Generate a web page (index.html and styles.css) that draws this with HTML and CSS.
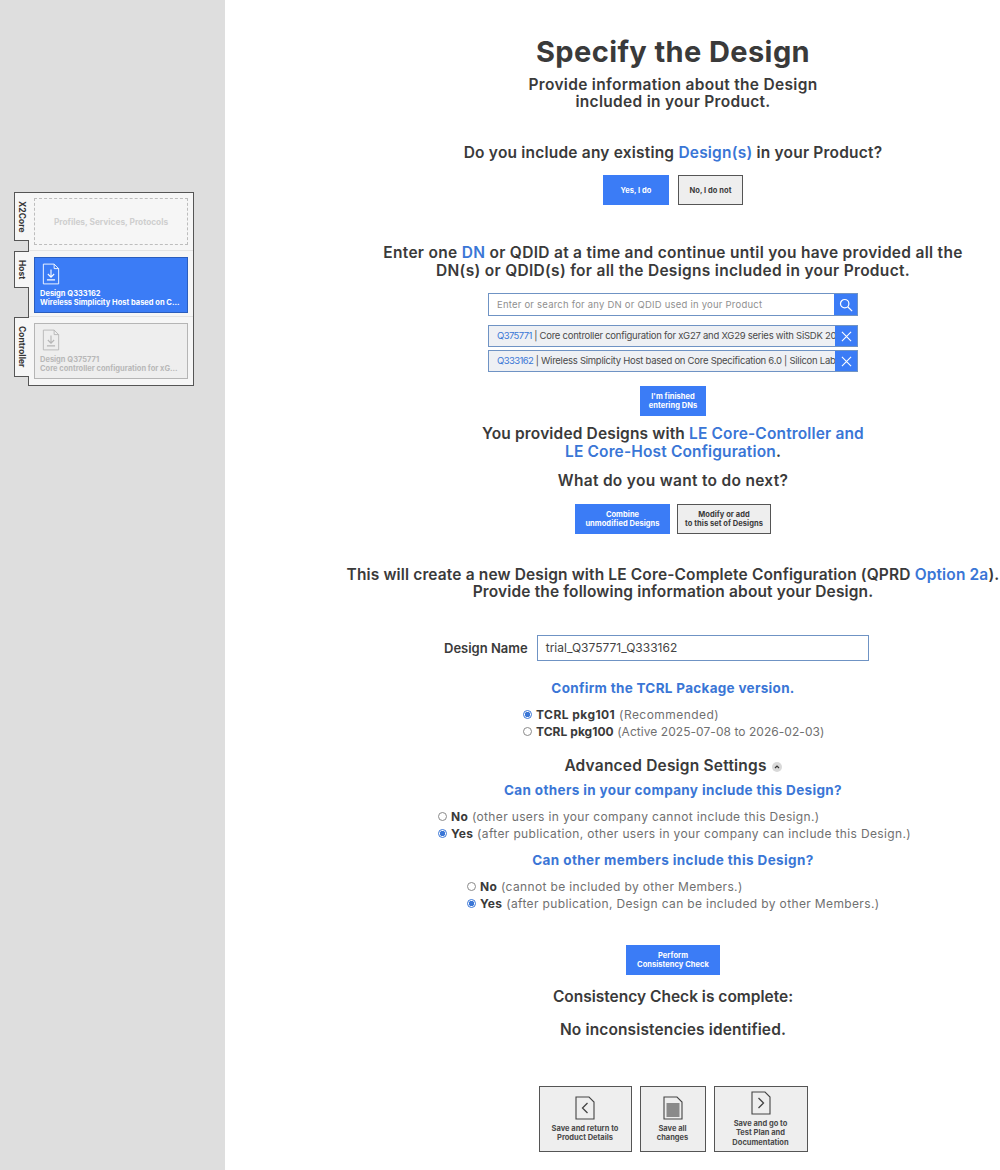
FILE: index.html
```html
<!DOCTYPE html>
<html lang="en">
<head>
<meta charset="utf-8">
<title>Specify the Design</title>
<link rel="stylesheet" href="styles.css">
</head>
<body>
<div class="page">
  <aside class="side">
    <div class="tree">
      <div class="tabs">
        <div class="tab tab-x2"><span>X2Core</span></div>
        <div class="tab tab-host"><span>Host</span></div>
        <div class="tab tab-ctrl"><span>Controller</span></div>
      </div>
      <div class="slots">
        <div class="slot slot-top"><div class="empty">Profiles, Services, Protocols</div></div>
        <div class="slot slot-mid">
          <div class="card card-on">
            <svg class="card-ico" viewBox="0 0 20 24"><path d="M1.5 1h12l5 5v17h-17z M13.500 1v5h5" fill="none" stroke="#fff" stroke-width="1"/><path d="M10 7v8M6.500 12l3.500 3.500 3.500-3.500M5.500 18.500h9" fill="none" stroke="#fff" stroke-width="1.200"/></svg>
            <div class="card-t">Design Q333162</div>
            <div class="card-t">Wireless Simplicity Host based on C...</div>
          </div>
        </div>
        <div class="slot slot-bot">
          <div class="card card-off">
            <svg class="card-ico" viewBox="0 0 20 24"><path d="M1.5 1h12l5 5v17h-17z M13.500 1v5h5" fill="none" stroke="#b5b5b5" stroke-width="1"/><path d="M10 7v8M6.500 12l3.500 3.500 3.500-3.500M5.500 18.500h9" fill="none" stroke="#b5b5b5" stroke-width="1.200"/></svg>
            <div class="card-t">Design Q375771</div>
            <div class="card-t">Core controller configuration for xG...</div>
          </div>
        </div>
      </div>
    </div>
  </aside>
  <main class="main">
    <h1 class="title">Specify the Design</h1>
    <p class="sub">Provide information about the Design<br>included in your Product.</p>
    <p class="q q1">Do you include any existing <a class="lnk">Design(s)</a> in your Product?</p>
    <div class="btns b1">
      <button class="btn on w66">Yes, I do</button>
      <button class="btn off w65">No, I do not</button>
    </div>
    <p class="q q2">Enter one <a class="lnk">DN</a> or QDID at a time and continue until you have provided all the<br>DN(s) or QDID(s) for all the Designs included in your Product.</p>
    <div class="search">
      <div class="search-in">Enter or search for any DN or QDID used in your Product</div>
      <div class="search-go"><svg viewBox="0 0 16 16" width="14" height="14"><circle cx="6.500" cy="6.500" r="4.800" fill="none" stroke="#fff" stroke-width="1.400"/><path d="M10 10l5 5" stroke="#fff" stroke-width="1.400"/></svg></div>
    </div>
    <div class="chip c1"><div class="chip-t"><a class="qid">Q375771</a> | Core controller configuration for xG27 and XG29 series with SiSDK 2024.12</div><div class="chip-x"><svg viewBox="0 0 12 12" width="11" height="11"><path d="M1 1l10 10M11 1L1 11" stroke="#fff" stroke-width="1.200"/></svg></div></div>
    <div class="chip c2"><div class="chip-t"><a class="qid">Q333162</a> | Wireless Simplicity Host based on Core Specification 6.0 | Silicon Labs</div><div class="chip-x"><svg viewBox="0 0 12 12" width="11" height="11"><path d="M1 1l10 10M11 1L1 11" stroke="#fff" stroke-width="1.200"/></svg></div></div>
    <div class="btns b2"><button class="btn on w66">I'm finished<br>entering DNs</button></div>
    <p class="q q3">You provided Designs with <a class="lnk">LE Core-Controller and<br>LE Core-Host Configuration</a>.</p>
    <p class="q q4">What do you want to do next?</p>
    <div class="btns b3">
      <button class="btn on w95">Combine<br>unmodified Designs</button>
      <button class="btn off w94">Modify or add<br>to this set of Designs</button>
    </div>
    <p class="q q5">This will create a new Design with LE Core-Complete Configuration (QPRD <a class="lnk">Option 2a</a>).<br>Provide the following information about your Design.</p>
    <div class="name">
      <label class="name-l">Design Name</label>
      <div class="name-in">trial_Q375771_Q333162</div>
    </div>
    <p class="h-blue h1b">Confirm the TCRL Package version.</p>
    <div class="radios r1">
      <div class="radio ls-a"><i class="dot sel"></i><span><b>TCRL pkg101</b> (Recommended)</span></div>
      <div class="radio ls-b"><i class="dot"></i><span><b>TCRL pkg100</b> (Active 2025-07-08 to 2026-02-03)</span></div>
    </div>
    <p class="adv">Advanced Design Settings <svg class="chev" viewBox="0 0 10 10" width="10" height="10"><circle cx="5" cy="5" r="5" fill="#d9d9d9"/><path d="M3 6l2-2 2 2" fill="none" stroke="#333" stroke-width="1.200"/></svg></p>
    <p class="h-blue h2b">Can others in your company include this Design?</p>
    <div class="radios r2">
      <div class="radio"><i class="dot"></i><span><b>No</b> (other users in your company cannot include this Design.)</span></div>
      <div class="radio"><i class="dot sel"></i><span><b>Yes</b> (after publication, other users in your company can include this Design.)</span></div>
    </div>
    <p class="h-blue h3b">Can other members include this Design?</p>
    <div class="radios r3">
      <div class="radio"><i class="dot"></i><span><b>No</b> (cannot be included by other Members.)</span></div>
      <div class="radio"><i class="dot sel"></i><span><b>Yes</b> (after publication, Design can be included by other Members.)</span></div>
    </div>
    <div class="btns b4"><button class="btn on w94">Perform<br>Consistency Check</button></div>
    <p class="q q6">Consistency Check is complete:</p>
    <p class="q q7">No inconsistencies identified.</p>
    <div class="btns b5">
      <button class="save s1"><svg class="save-ico" viewBox="0 0 20 24"><path d="M1 1h13l5 5v17H1z" fill="none" stroke="#444" stroke-width="1.100"/><path d="M12.500 7l-5 5 5 5" fill="none" stroke="#444" stroke-width="1.300"/></svg><span>Save and return to<br>Product Details</span></button>
      <button class="save s2"><svg class="save-ico" viewBox="0 0 20 24"><path d="M1 1h13l5 5v17H1z" fill="none" stroke="#444" stroke-width="1.100"/><rect x="3.500" y="7" width="13" height="14" fill="#8a8a8a"/></svg><span>Save all<br>changes</span></button>
      <button class="save s3"><svg class="save-ico" viewBox="0 0 20 24"><path d="M1 1h13l5 5v17H1z" fill="none" stroke="#444" stroke-width="1.100"/><path d="M7.500 7l5 5-5 5" fill="none" stroke="#444" stroke-width="1.300"/></svg><span>Save and go to<br>Test Plan and<br>Documentation</span></button>
    </div>
  </main>
</div>
</body>
</html>
```
FILE: styles.css
```css
* { box-sizing: border-box; }
html, body { margin: 0; padding: 0; background: #fff; }
body { font-family: Inter, "Liberation Sans", sans-serif; color: #3a3a3a; overflow: hidden; }
p { margin: 0; }
.page { display: flex; width: 1000px; height: 1170px; }
.side { width: 225px; flex: none; background: #dedede; padding: 192px 0 0 14px; }
.main { width: 775px; height: 1170px; padding-left: 121px; display: flex; flex-direction: column; align-items: center; text-align: center; white-space: nowrap; }
.main > * { flex: none; }

/* tree */
.tree { display: flex; width: 180px; height: 194px; }
.tabs { width: 14px; flex: none; display: flex; flex-direction: column; border-top: 1px solid #555; }
.tab { width: 15px; position: relative; z-index: 1; background: #f6f6f6; border-left: 1px solid #555; border-bottom: 1px solid #555; padding-right: 1px; display: flex; justify-content: center; align-items: flex-start; font-size: 8.500px; font-weight: 700; color: #333; }
.tab span { writing-mode: vertical-rl; padding-top: 8px; white-space: nowrap; }
.tab-x2 { height: 48px; }
.tab-host { height: 37px; margin-top: 10px; border-top: 1px solid #555; }
.tab-ctrl { height: 60px; margin-top: 29px; border-top: 1px solid #555; }
.slots { width: 166px; height: 194px; background: #f6f6f6; border: 1px solid #555; border-right-width: 1.500px; border-bottom-width: 1.500px; display: flex; flex-direction: column; }
.slot { padding: 6px 5px 0; }
.slot-top { height: 58px; padding-top: 5px; border-bottom: 1px solid #e3e3e3; }
.slot-mid { height: 66px; border-bottom: 1px solid #e3e3e3; }
.empty { height: 47px; border: 1px dashed #bdbdbd; display: flex; align-items: center; justify-content: center; font-size: 8.300px; font-weight: 700; color: #cfcfcf; }
.card { height: 56px; padding: 5px 5px 0; font-size: 7.500px; font-weight: 700; line-height: 9px; white-space: nowrap; overflow: hidden; }
.card-on { background: #3b7cf6; color: #fff; border: 1px solid #2a5dbd; }
.card-off { background: #eee; color: #b8b8b8; border: 1px solid #b5b5b5; }
.card-ico { display: block; width: 18px; height: 22px; margin: 0 0 4px 2px; }

/* type */
.title { margin: 35px 0 0; font-size: 29px; line-height: 34px; font-weight: 700; color: #3a3a3a; letter-spacing: .4px; }
.sub { margin-top: 7px; font-size: 15.500px; line-height: 17px; font-weight: 600; letter-spacing: .3px; }
.q { font-size: 15.500px; line-height: 18px; font-weight: 600; }
.lnk { color: #3a76d6; }
.q1 { margin-top: 34px; letter-spacing: .2px; }
.q2 { margin-top: 39px; letter-spacing: .3px; }
.q3 { margin-top: 9px; letter-spacing: .15px; }
.q4 { margin-top: 11px; letter-spacing: .3px; }
.q5 { margin-top: 32px; line-height: 17px; letter-spacing: .14px; }
.q6 { margin-top: 13px; }
.q7 { margin-top: 15px; letter-spacing: .13px; }
.h-blue { font-size: 13.500px; line-height: 16px; font-weight: 700; color: #3a76d6; }
.h1b { margin-top: 19px; letter-spacing: .3px; }
.h2b { margin-top: 7px; letter-spacing: .35px; }
.h3b { margin-top: 10px; letter-spacing: .4px; }
.adv { margin-top: 17px; font-size: 15.500px; line-height: 18px; font-weight: 600; letter-spacing: .2px; display: flex; align-items: center; gap: 5px; }
.chev { margin-top: 2px; }

/* buttons */
.btns { display: flex; gap: 8px; }
.b1 { margin-top: 13px; gap: 9px; }
.b2 { margin-top: 14px; }
.b3 { margin-top: 14px; gap: 7px; }
.b4 { margin-top: 33px; }
.b5 { margin-top: 47px; }
.btn { height: 30px; padding: 0; font: 700 7.500px/9px Inter, "Liberation Sans", sans-serif; letter-spacing: .05px; }
.on { background: #3b7cf6; color: #fff; border: 1px solid #3b7cf6; }
.off { background: #eee; color: #3a3a3a; border: 1px solid #555; }
.w66 { width: 66px; }
.w65 { width: 65px; }
.w95 { width: 95px; }
.w94 { width: 94px; }
.save { height: 66px; background: #eee; border: 1px solid #555; padding: 0; display: flex; flex-direction: column; align-items: center; justify-content: center; gap: 4px; font: 700 7.500px/9.500px Inter, "Liberation Sans", sans-serif; color: #4a4a4a; }
.s1 { width: 93px; }
.s2 { width: 66px; }
.s3 { width: 94px; }
.save-ico { width: 20px; height: 24px; }

/* search */
.search { margin-top: 13px; width: 370px; height: 23px; display: flex; border: 1px solid #6f93c4; }
.search-in { flex: 1; font-size: 9.500px; line-height: 21px; color: #8f8f8f; text-align: left; padding-left: 8px; letter-spacing: .22px; }
.search-go { width: 23px; background: #3b7cf6; display: flex; align-items: center; justify-content: center; }
.chip { width: 370px; height: 22px; display: flex; background: #eef0f4; border: 1px solid #6f93c4; }
.c1 { margin-top: 9px; }
.c2 { margin-top: 3px; }
.chip-t { flex: 1; min-width: 0; overflow: hidden; font-size: 9.500px; line-height: 20px; color: #4a4a4a; padding-left: 8px; text-align: left; letter-spacing: -.25px; }
.qid { color: #3a76d6; letter-spacing: -.6px; }
.chip-x { width: 22px; flex: none; background: #3b7cf6; display: flex; align-items: center; justify-content: center; }

/* name */
.name { margin-top: 35px; display: flex; align-items: center; gap: 9px; align-self: flex-start; margin-left: 98px; }
.name-l { font-size: 13px; font-weight: 600; }
.name-in { width: 332px; height: 26px; border: 1px solid #6f93c4; font-size: 12px; line-height: 24px; padding-left: 8px; text-align: left; color: #444; }

/* radios */
.radios { align-self: flex-start; text-align: left; font-size: 12px; line-height: 17px; color: #707070; }
.radios b { color: #3a3a3a; font-weight: 700; }
.radio { display: flex; align-items: center; gap: 4px; }
.dot { width: 9px; height: 9px; border-radius: 50%; border: 1px solid #8a8a8a; background: #fff; flex: none; }
.sel { border-color: #3a76d6; background: radial-gradient(circle, #3a76d6 0 2.500px, #fff 3px); }
.ls-a { letter-spacing: .45px; }
.ls-b { letter-spacing: .05px; }
.r1 { margin: 10px 0 0 177px; }
.r2 { margin: 10px 0 0 92px; letter-spacing: .35px; }
.r3 { margin: 10px 0 0 121px; letter-spacing: .36px; }
```
